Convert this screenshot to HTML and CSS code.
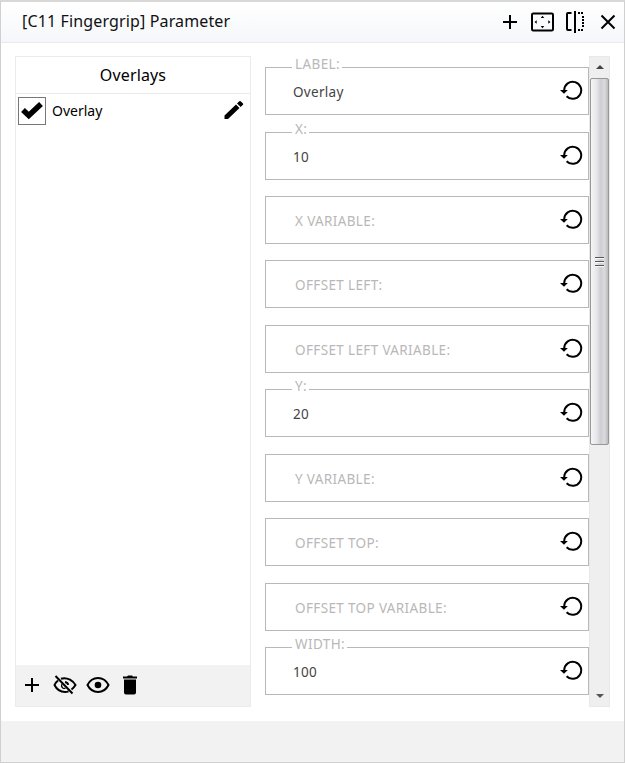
FILE: index.html
```html
<!DOCTYPE html>
<html lang="en">
<head>
<meta charset="utf-8">
<title>[C11 Fingergrip] Parameter</title>
<link rel="stylesheet" href="styles.css">
</head>
<body>
<svg class="defs" width="0" height="0">
  <symbol id="reset" viewBox="0 0 24 24"><path d="M5.2 12A8.5 8.5 0 1 1 7.6 18.2" fill="none" stroke="#000" stroke-width="2"/><path d="M1 12H8.800L5 15.800Z"/></symbol>
  <symbol id="plus" viewBox="0 0 16 16"><path d="M8 1V15M1 8H15" fill="none" stroke="#000" stroke-width="2"/></symbol>
</svg>
<div class="dialog">
  <header class="titlebar">
    <h1>[C11 Fingergrip] Parameter</h1>
    <div class="tools">
      <svg width="16" height="16"><use href="#plus"/></svg>
      <svg width="24" height="20" viewBox="0 0 24 20"><rect x="2" y="1.5" width="21" height="17" rx="1.3" fill="none" stroke="#000" stroke-width="2"/><path d="M12.500 3.800l1.800 2.200h-3.600zM12.500 16.200l1.800-2.200h-3.600zM4.500 10l2.200-1.800v3.600zM20.500 10l-2.200-1.800v3.600z"/></svg>
      <svg width="20" height="24" viewBox="0 0 20 24"><path d="M6.500 3H3Q2 3 2 4V19Q2 20 3 20H6.500M10 1V23" fill="none" stroke="#000" stroke-width="2"/><path d="M13 3H19M13 20H19M18 6V18" fill="none" stroke="#000" stroke-width="2" stroke-dasharray="2 1"/></svg>
      <svg width="16" height="16" viewBox="0 0 16 16"><path d="M1.500 1.500L14.500 14.500M14.500 1.500L1.500 14.500" stroke="#000" stroke-width="2"/></svg>
    </div>
  </header>
  <main class="content">
    <section class="overlays">
      <h2><span>Overlays</span></h2>
      <div class="item">
        <span class="check"><svg width="26" height="26" viewBox="0 0 26 26"><path d="M4 12L9.800 17.500L22 6" fill="none" stroke="#000" stroke-width="5.500"/></svg></span>
        <span class="name">Overlay</span>
        <svg class="pencil" width="20" height="20" viewBox="0 0 20 20"><path d="M.5 15.500L12 4.500L15.500 8L4 19H.5ZM13 3.500L15.300 1.300Q16 .7 16.700 1.300L19 3.600Q19.500 4.200 19 4.800L16.700 7Z"/></svg>
      </div>
      <div class="actions">
        <svg width="16" height="16"><use href="#plus"/></svg>
        <svg width="24" height="20" viewBox="0 0 24 20"><path d="M2.500 1L19.500 18.500M8 3.800Q12 2.200 17 4.600Q20.500 6.500 22.500 10Q21 12.500 18.500 14.500M5 5.500Q2.500 7.500 1.500 10Q5 17 12 17Q14 17 15.500 16.300M12 7Q14.800 7.400 15.200 9.800" fill="none" stroke="#000" stroke-width="2"/><path d="M9 9Q7.800 11.500 9.800 13Q11 13.800 12.500 13.200" fill="none" stroke="#000" stroke-width="1.200"/></svg>
        <svg width="24" height="20" viewBox="0 0 24 20"><path d="M1.500 10Q5 3 12 3T22.500 10Q19 17 12 17T1.500 10Z" fill="none" stroke="#000" stroke-width="2"/><circle cx="12" cy="10" r="3.300"/></svg>
        <svg width="14" height="20" viewBox="0 0 14 20"><path d="M0 1.500H4L5 .5H9L10 1.500H14V3.500H0ZM1 4.500H13V17.500Q13 19.500 11 19.500H3Q1 19.500 1 17.500Z"/></svg>
      </div>
    </section>
    <section class="parameters">
      <div class="fields">
        <div class="field"><label class="raised">LABEL:</label><span class="value">Overlay</span><svg><use href="#reset"/></svg></div>
        <div class="field"><label class="raised">X:</label><span class="value">10</span><svg><use href="#reset"/></svg></div>
        <div class="field"><label>X VARIABLE:</label><svg><use href="#reset"/></svg></div>
        <div class="field"><label>OFFSET LEFT:</label><svg><use href="#reset"/></svg></div>
        <div class="field"><label>OFFSET LEFT VARIABLE:</label><svg><use href="#reset"/></svg></div>
        <div class="field"><label class="raised">Y:</label><span class="value">20</span><svg><use href="#reset"/></svg></div>
        <div class="field"><label>Y VARIABLE:</label><svg><use href="#reset"/></svg></div>
        <div class="field"><label>OFFSET TOP:</label><svg><use href="#reset"/></svg></div>
        <div class="field"><label>OFFSET TOP VARIABLE:</label><svg><use href="#reset"/></svg></div>
        <div class="field"><label class="raised">WIDTH:</label><span class="value">100</span><svg><use href="#reset"/></svg></div>
      </div>
      <div class="scrollbar">
        <span class="arrow up"></span>
        <div class="thumb"><i></i><i></i><i></i></div>
        <span class="arrow down"></span>
      </div>
    </section>
  </main>
  <footer></footer>
</div>
</body>
</html>
```
FILE: styles.css
```css
* { box-sizing: border-box; }
body { margin: 0; font-family: "Noto Sans", sans-serif; color: #111; background: #fff; }
svg { display: block; flex: none; }
.defs { position: absolute; }
.dialog { width: 625px; height: 763px; border: 1px solid #d0d0d0; border-top: 2px solid #d8d8d8; display: flex; flex-direction: column; }
.titlebar { height: 41px; flex: none; display: flex; align-items: center; justify-content: space-between; padding: 0 9px 2px 21px; border-bottom: 1px solid #e8eaec; background: linear-gradient(#fff, #f5f7fa); }
h1 { margin: 0; font-size: 16px; font-weight: 400; line-height: 24px; letter-spacing: .14px; white-space: nowrap; }
.tools { display: flex; align-items: center; padding-top: 2px; }
.tools svg:nth-child(1) { margin-right: 12.5px; }
.tools svg:nth-child(2) { margin-right: 11px; }
.tools svg:nth-child(3) { margin-right: 14px; }
.tools svg:nth-child(4) { margin-right: -1px; margin-left: 1px; }
.content { height: 678px; flex: none; display: flex; padding: 13px 14px 14px; }
.overlays { width: 236px; border: 1px solid #ebebeb; display: flex; flex-direction: column; }
h2 { margin: 0; height: 37px; flex: none; border-bottom: 1px solid #ebebeb; font-size: 16px; font-weight: 400; line-height: 36px; letter-spacing: .15px; text-align: center; color: #000; }
.item { display: flex; align-items: center; height: 33px; padding: 0 6px 0 2px; font-size: 14px; color: #000; }
.pencil { position: relative; top: -1px; }
.check { width: 28px; height: 28px; border: 1px solid #777; margin-right: 6px; }
.name { flex: 1; }
.actions { height: 41px; margin-top: auto; padding: 0 0 1px 8px; background: #f2f2f2; display: flex; align-items: center; }
.actions svg { margin-right: 9px; }
.actions svg:nth-child(1) { margin-right: 12.5px; }
.actions svg:nth-child(3) { margin-right: 13.5px; }
.parameters { display: flex; margin-left: 14px; }
.fields { width: 324px; padding-top: 11.1px; }
.field { position: relative; height: 48px; margin-bottom: 16.45px; border: 1px solid #b8b8b8; display: flex; align-items: center; padding: 0 5px 0 27px; font-size: 13.5px; }
.field svg { width: 24px; height: 24px; margin-left: auto; margin-top: -2px; }
label { color: #b8b8b8; padding: 2px 0 0 2px; letter-spacing: .36px; white-space: nowrap; }
.raised { position: absolute; left: 26px; top: -12.8px; padding: 0 2px 0 3px; background: #fff; line-height: 18px; letter-spacing: .4px; }
.value { color: #444; padding-top: 2px; letter-spacing: .3px; }
.scrollbar { width: 21px; height: 651px; background: #efefef; border: 1px solid #e8e8e8; display: flex; flex-direction: column; align-items: center; }
.arrow { border: 4.5px solid transparent; }
.up { border-top: 0; border-bottom-color: #444; margin: 8px 0 9px; }
.down { border-bottom: 0; border-top-color: #555; margin-top: auto; margin-bottom: 8px; }
.thumb { width: 19px; height: 367px; border: 1px solid #979797; border-radius: 2px; background: linear-gradient(90deg, #f6f6f6, #e5e5e8 35%, #cfcfd3 55%, #dadade 80%, #bbb); display: flex; flex-direction: column; align-items: center; justify-content: center; gap: 3px; }
.thumb i { width: 9px; height: 1px; background: #555; box-shadow: 0 1px #f8f8f8; }
footer { flex: 1; background: #f2f2f2; }
```
